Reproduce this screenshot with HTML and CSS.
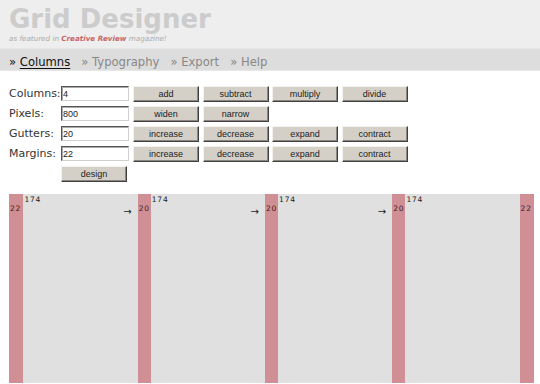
FILE: index.html
```html
<!DOCTYPE html>
<html>
<head>
<meta charset="utf-8">
<title>Grid Designer</title>
<link rel="stylesheet" href="styles.css">
</head>
<body>
<div class="header">
  <div class="title">Grid Designer</div>
  <div class="sub">as featured in <b class="cr">Creative Review</b> magazine!</div>
</div>
<div class="nav">
  <span class="item active">» <u>Columns</u></span>
  <span class="item">» Typography</span>
  <span class="item">» Export</span>
  <span class="item">» Help</span>
</div>
<div class="form">
  <label class="lbl">Columns:</label>
  <input class="inp" type="text" value="4">
  <button class="btn">add</button>
  <button class="btn">subtract</button>
  <button class="btn">multiply</button>
  <button class="btn">divide</button>

  <label class="lbl">Pixels:</label>
  <input class="inp" type="text" value="800">
  <button class="btn">widen</button>
  <button class="btn">narrow</button>
  <span></span>
  <span></span>

  <label class="lbl">Gutters:</label>
  <input class="inp" type="text" value="20">
  <button class="btn">increase</button>
  <button class="btn">decrease</button>
  <button class="btn">expand</button>
  <button class="btn">contract</button>

  <label class="lbl">Margins:</label>
  <input class="inp" type="text" value="22">
  <button class="btn">increase</button>
  <button class="btn">decrease</button>
  <button class="btn">expand</button>
  <button class="btn">contract</button>

  <span></span>
  <button class="btn design">design</button>
</div>
<div class="grid">
  <div class="margin"><span class="ml">22</span></div>
  <div class="col"><span class="w">174</span><span class="arrow">→</span></div>
  <div class="gutter"><span class="ml">20</span></div>
  <div class="col"><span class="w">174</span><span class="arrow">→</span></div>
  <div class="gutter"><span class="ml">20</span></div>
  <div class="col"><span class="w">174</span><span class="arrow">→</span></div>
  <div class="gutter"><span class="ml">20</span></div>
  <div class="col"><span class="w">174</span></div>
  <div class="margin"><span class="ml">22</span></div>
</div>
</body>
</html>
```
FILE: styles.css
```css
html, body {
  margin: 0;
  padding: 0;
  background: #fff;
  overflow: hidden;
}
body {
  font-family: "DejaVu Sans", Verdana, sans-serif;
}
.header {
  background: #eeeeee;
  height: 48px;
  box-sizing: border-box;
  padding: 5px 0 0 9px;
}
.title {
  font-family: "DejaVu Sans", sans-serif;
  font-weight: bold;
  font-size: 26px;
  line-height: 29px;
  color: #cccccc;
}
.sub {
  font-size: 7.2px;
  line-height: 10px;
  margin-top: 0;
  font-style: italic;
  color: #aaaaaa;
}
.cr {
  color: #c8676b;
}
.nav {
  background: #dddddd;
  height: 23px;
  box-sizing: border-box;
  padding: 3px 0 0 9px;
  font-size: 11.6px;
  line-height: 20px;
  color: #888888;
  display: flex;
  gap: 11px;
  border-top: 1px solid #e6e6e6;
  border-bottom: 1px solid #e8e8e8;
}
.item.active {
  color: #111111;
}
.item u {
  text-underline-offset: 2px;
}
.form {
  display: grid;
  grid-template-columns: 52px 72px 69.5px 69.5px 69.5px 69.5px;
  grid-auto-rows: 20px;
  margin: 15px 0 0 9px;
  align-items: start;
}
.lbl {
  font-size: 11px;
  line-height: 16px;
  color: #333333;
}
.inp {
  width: 68px;
  height: 15px;
  box-sizing: border-box;
  margin: 0;
  padding: 0 0 0 1px;
  border: 1px solid;
  border-color: #555 #d0d0d0 #d0d0d0 #555;
  box-shadow: inset 1px 1px 0 #aaa;
  font-family: "Liberation Sans", Arial, sans-serif;
  font-size: 9px;
  color: #222;
  background: #fff;
  outline: none;
}
.btn {
  width: 66px;
  height: 16px;
  box-sizing: border-box;
  margin: 0;
  padding: 0;
  background: #d4d0c8;
  border: 1px solid;
  border-color: #f4f2ee #404040 #404040 #f4f2ee;
  box-shadow: inset -1px -1px 0 #8a8680;
  font-family: "Liberation Sans", Tahoma, Arial, sans-serif;
  font-size: 9px;
  line-height: 13px;
  color: #222;
}
.grid {
  display: flex;
  margin: 8px 0 0 9px;
  width: 525px;
  height: 189px;
  background: #e0e0e0;
}
.margin {
  flex: 22 0 0;
  min-width: 0;
  background: #d08f94;
}
.gutter {
  flex: 20 0 0;
  min-width: 0;
  background: #d08f94;
}
.col {
  flex: 174 0 0;
  min-width: 0;
  display: flex;
  flex-direction: column;
}
.w {
  font-family: "DejaVu Sans", sans-serif;
  font-size: 7.5px;
  line-height: 8px;
  letter-spacing: 0.8px;
  color: #222;
  margin: 2px 0 0 1px;
}
.arrow {
  align-self: flex-end;
  font-size: 10px;
  line-height: 10px;
  color: #222;
  margin: 3px 6px 0 0;
}
.ml {
  display: block;
  font-family: "DejaVu Sans", sans-serif;
  font-size: 7.5px;
  line-height: 8px;
  letter-spacing: 0.8px;
  color: #3a2020;
  margin: 11px 0 0 1px;
}
```
